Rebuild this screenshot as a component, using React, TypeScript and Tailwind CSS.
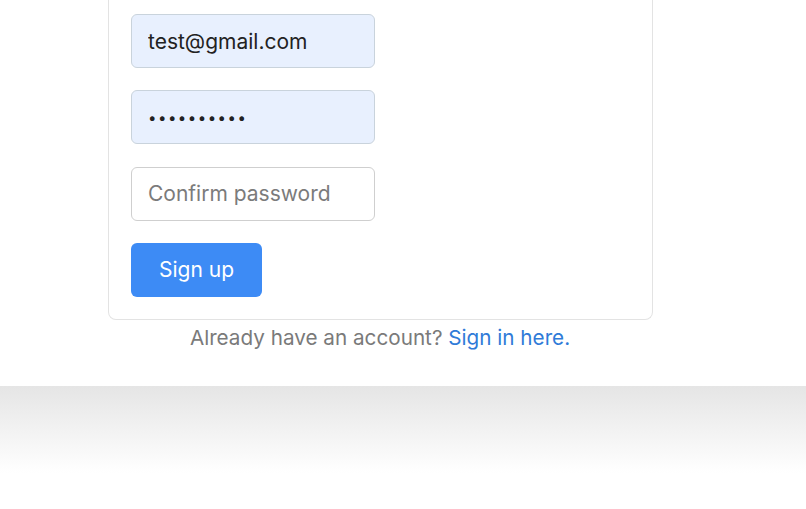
export default function App() {
  return (
    <div className="min-h-[509px] bg-white font-['Inter','Liberation_Sans',sans-serif]">
      <div className="bg-white pb-[33px]">
        <div className="ml-[108px] w-[545px] rounded-b-lg border border-t-0 border-[#e3e3e3] px-[22px] pt-[14px] pb-[22px]">
          <div className="flex flex-col gap-[22.3px]">
            <input
              readOnly
              value="test@gmail.com"
              className="h-[54px] w-[244px] rounded-md border border-[#c9d3dc] bg-[#e8f0fe] px-[16px] text-[21px] text-[#222] outline-none"
            />
            <input
              readOnly
              type="password"
              value="0123456789"
              className="h-[54px] w-[244px] rounded-md border border-[#c9d3dc] bg-[#e8f0fe] px-[16px] text-[15px] tracking-[1.5px] text-[#222] outline-none"
            />
            <input
              placeholder="Confirm password"
              className="h-[54px] w-[244px] rounded-md border border-[#cfcfcf] bg-white px-[16px] text-[21px] text-[#222] placeholder:text-[#7b7b7b] outline-none"
            />
            <button className="h-[54px] w-[131px] rounded-md bg-[#3d8bf5] text-[21px] text-white">
              Sign up
            </button>
          </div>
        </div>
        <p className="mt-[3px] w-[760px] text-center text-[20.7px] leading-[30px] text-[#7a7a7a]">
          Already have an account?{" "}
          <a href="#" className="text-[#2f7bd8]">
            Sign in here.
          </a>
        </p>
      </div>
      <div className="h-[87px] bg-gradient-to-b from-[#e5e5e5] to-white" />
    </div>
  );
}
